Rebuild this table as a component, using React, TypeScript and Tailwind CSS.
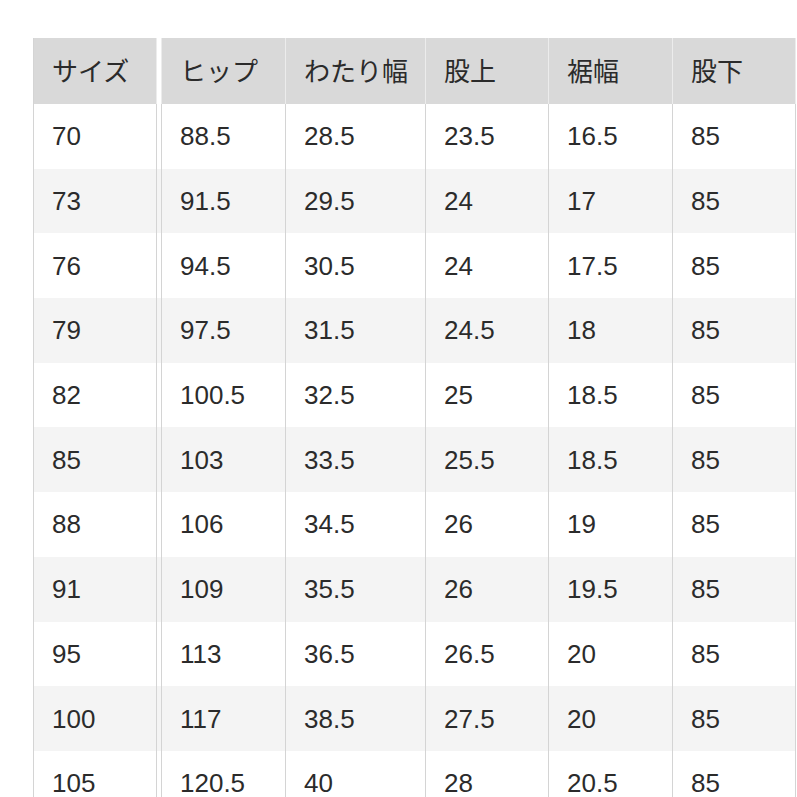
const headers = ['サイズ', 'ヒップ', 'わたり幅', '股上', '裾幅', '股下'];

const rows = [
  ['70', '88.5', '28.5', '23.5', '16.5', '85'],
  ['73', '91.5', '29.5', '24', '17', '85'],
  ['76', '94.5', '30.5', '24', '17.5', '85'],
  ['79', '97.5', '31.5', '24.5', '18', '85'],
  ['82', '100.5', '32.5', '25', '18.5', '85'],
  ['85', '103', '33.5', '25.5', '18.5', '85'],
  ['88', '106', '34.5', '26', '19', '85'],
  ['91', '109', '35.5', '26', '19.5', '85'],
  ['95', '113', '36.5', '26.5', '20', '85'],
  ['100', '117', '38.5', '27.5', '20', '85'],
  ['105', '120.5', '40', '28', '20.5', '85'],
];

const font = { fontFamily: '"Liberation Sans", "Noto Sans CJK JP", sans-serif' };

function Row({ cells, head, stripe }: { cells: string[]; head?: boolean; stripe?: boolean }) {
  const bg = head ? 'bg-[#d9d9d9]' : stripe ? 'bg-[#f4f4f4]' : 'bg-white';
  const line = head ? 'border-[#ececec]' : 'border-[#d4d4d4]';
  const h = head ? 'h-[66px] text-[26px]' : 'h-[64.7px] text-[26px]';
  const cell = `flex items-center pl-[18px] border-r ${head ? 'pt-[3px]' : 'pt-[1px]'} ${line} ${bg}`;
  return (
    <div className={`flex shrink-0 ${h}`}>
      <div className={`${cell} w-[124px] border-l border-l-[#d4d4d4]`}>{cells[0]}</div>
      <div className={`w-[4px] ${head ? 'bg-white' : bg}`} />
      <div className={`${cell} w-[125px] border-l ${line}`}>{cells[1]}</div>
      <div className={`${cell} w-[140px]`}>{cells[2]}</div>
      <div className={`${cell} w-[123px]`}>{cells[3]}</div>
      <div className={`${cell} w-[124px]`}>{cells[4]}</div>
      <div className={`${cell} w-[123px]`}>{cells[5]}</div>
    </div>
  );
}

export default function App() {
  return (
    <div className="w-[797px] h-[797px] overflow-hidden bg-white text-[#2b2b2b]" style={font}>
      <div className="pt-[38px] pl-[33px] flex flex-col">
        <Row cells={headers} head />
        {rows.map((r, i) => (
          <Row key={r[0]} cells={r} stripe={i % 2 === 1} />
        ))}
      </div>
    </div>
  );
}
